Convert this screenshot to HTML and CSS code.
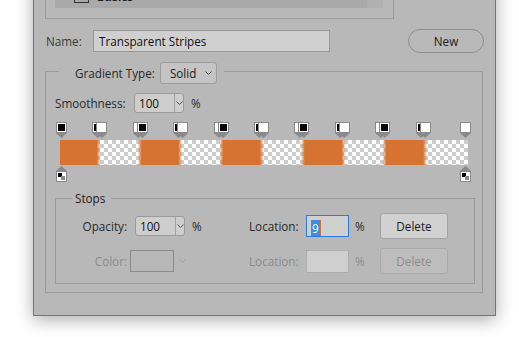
FILE: index.html
```html
<!DOCTYPE html>
<html lang="en">
<head>
  <meta charset="UTF-8">
  <title>Gradient Editor</title>
  <link rel="stylesheet" href="styles.css">
</head>
<body>
  <div class="dialog">
    <div class="presets">
      <div class="preset-list">
        <div class="preset-row">
          <svg class="twisty" width="5" height="8" viewBox="0 0 5 8"><path d="M0.5 0.5 L4 4 L0.5 7.5" fill="none" stroke="#333" stroke-width="1"/></svg>
          <span class="folder"></span>
          <span class="preset-name">Basics</span>
        </div>
        <div class="preset-scroll"></div>
      </div>
    </div>

    <div class="name-row">
      <span class="label name-label">Name:</span>
      <div class="text-box name-input">Transparent Stripes</div>
      <button class="btn-new">New</button>
    </div>

    <fieldset class="group gradient-group">
      <legend class="type-legend">
        <span class="label">Gradient Type:</span>
        <span class="select">Solid
          <svg class="chev" width="7" height="4" viewBox="0 0 7 4"><path d="M0.5 0.5 L3.5 3.5 L6.5 0.5" fill="none" stroke="#555" stroke-width="1"/></svg>
        </span>
      </legend>

      <div class="smooth-row">
        <span class="label smooth-label">Smoothness:</span>
        <span class="combo">
          <span class="combo-value">100</span>
          <span class="combo-btn"><svg class="chev" width="7" height="4" viewBox="0 0 7 4"><path d="M0.5 0.5 L3.5 3.5 L6.5 0.5" fill="none" stroke="#555" stroke-width="1"/></svg></span>
        </span>
        <span class="label pct">%</span>
      </div>

      <div class="gradient-editor">
        <div class="stop-track top">
          <span class="stop op" style="left:0%"><b class="sq black"></b></span>
          <span class="stop op" style="left:9%"><b class="sq black"></b></span>
          <span class="stop op" style="left:10%"></span>
          <span class="stop op" style="left:19%"></span>
          <span class="stop op" style="left:20%"><b class="sq black"></b></span>
          <span class="stop op" style="left:29%"><b class="sq black"></b></span>
          <span class="stop op" style="left:30%"></span>
          <span class="stop op" style="left:39%"></span>
          <span class="stop op" style="left:40%"><b class="sq black"></b></span>
          <span class="stop op" style="left:49%"><b class="sq black"></b></span>
          <span class="stop op" style="left:50%"></span>
          <span class="stop op" style="left:59%"></span>
          <span class="stop op" style="left:60%"><b class="sq black"></b></span>
          <span class="stop op" style="left:69%"><b class="sq black"></b></span>
          <span class="stop op" style="left:70%"></span>
          <span class="stop op" style="left:79%"></span>
          <span class="stop op" style="left:80%"><b class="sq black"></b></span>
          <span class="stop op" style="left:89%"><b class="sq black"></b></span>
          <span class="stop op" style="left:90%"></span>
          <span class="stop op" style="left:100%"></span>
        </div>
        <div class="gradient-bar"></div>
        <div class="stop-track bottom">
          <span class="stop col" style="left:0%"><b class="fg"></b><b class="bg"></b></span>
          <span class="stop col" style="left:100%"><b class="fg"></b><b class="bg"></b></span>
        </div>
      </div>

      <fieldset class="group stops-group">
        <legend class="stops-legend">Stops</legend>

        <div class="stop-row">
          <span class="label cell-label">Opacity:</span>
          <span class="cell-ctrl">
            <span class="combo">
              <span class="combo-value">100</span>
              <span class="combo-btn"><svg class="chev" width="7" height="4" viewBox="0 0 7 4"><path d="M0.5 0.5 L3.5 3.5 L6.5 0.5" fill="none" stroke="#555" stroke-width="1"/></svg></span>
            </span>
          </span>
          <span class="label cell-pct">%</span>
          <span class="label cell-loc">Location:</span>
          <div class="text-box loc-input focused"><span class="sel">9</span></div>
          <span class="label loc-pct">%</span>
          <button class="btn-delete">Delete</button>
        </div>

        <div class="stop-row disabled">
          <span class="label cell-label">Color:</span>
          <span class="cell-ctrl">
            <span class="swatch"></span>
            <svg class="chev swatch-chev" width="7" height="4" viewBox="0 0 7 4"><path d="M0.5 0.5 L3.5 3.5 L6.5 0.5" fill="none" stroke="#9c9c9c" stroke-width="1"/></svg>
          </span>
          <span class="label cell-pct"></span>
          <span class="label cell-loc">Location:</span>
          <div class="text-box loc-input"></div>
          <span class="label loc-pct">%</span>
          <button class="btn-delete">Delete</button>
        </div>
      </fieldset>
    </fieldset>
  </div>
</body>
</html>
```

FILE: styles.css
```css
body {
  margin: 0;
  height: 337px;
  overflow: hidden;
  background: #fff;
  font-family: "Open Sans", "Noto Sans", sans-serif;
  font-size: 11.7px;
  color: #1c1c1c;
}
.dialog {
  box-sizing: border-box;
  width: 463px;
  margin: -40px 0 0 33px;
  padding: 0 12px 22px 11px;
  background: #b8b8b8;
  border: 1px solid #757575;
  box-shadow: 0 4px 16px rgba(0, 0, 0, 0.32);
}
.label {
  color: #2a2a2a;
  line-height: 16px;
}

/* preset list (cut off at the top) */
.presets {
  box-sizing: border-box;
  width: 349px;
  margin-top: 10px;
  padding: 9px 10px 10px 9px;
  border: 1px solid #9c9c9c;
}
.preset-list {
  display: flex;
  height: 27px;
  background: #a9a9a9;
}
.preset-row {
  flex: 1;
  display: flex;
  align-items: flex-start;
  padding: 7px 0 0 8px;
  line-height: 16px;
}
.twisty {
  margin-top: 4px;
}
.folder {
  width: 13px;
  height: 9px;
  margin: 4px 0 0 6px;
  border: 1px solid #333;
}
.preset-name {
  margin-left: 8px;
  font-weight: 700;
}
.preset-scroll {
  width: 16px;
  background: #b0b0b0;
}

/* name row */
.name-row {
  display: flex;
  align-items: center;
  height: 24px;
  margin: 10px -1px 0 0;
}
.name-label {
  width: 47px;
  margin-left: 1px;
  color: #3a3a3a;
}
.text-box {
  box-sizing: border-box;
  height: 22px;
  line-height: 20px;
  background: #d0d0d0;
  border: 1px solid #979797;
  color: #111;
}
.name-input {
  width: 237px;
  padding-left: 5px;
}
.btn-new {
  box-sizing: border-box;
  width: 76px;
  height: 24px;
  margin-left: auto;
  padding: 0;
  font: inherit;
  color: #1c1c1c;
  background: #b9b9b9;
  border: 1px solid #8e8e8e;
  border-radius: 12px;
}

/* group boxes */
.group {
  min-width: 0;
  margin: 0;
  border: 1px solid #9b9b9b;
}
.gradient-group {
  margin-top: 5px;
  padding: 9px 7px 8px 9px;
}
.type-legend {
  display: flex;
  align-items: center;
  margin-left: 4px;
  padding: 4px 7px 0 16px;
}
.select {
  box-sizing: border-box;
  display: flex;
  align-items: center;
  justify-content: space-between;
  width: 57px;
  height: 22px;
  margin-left: 5px;
  padding: 0 4px 0 9px;
  background: #c4c4c4;
  border: 1px solid #9d9d9d;
  border-radius: 3px;
  color: #1c1c1c;
}

/* combo box */
.smooth-row {
  display: flex;
  align-items: center;
  height: 20px;
}
.smooth-label {
  width: 79px;
}
.combo {
  box-sizing: border-box;
  display: flex;
  width: 50px;
  height: 20px;
  background: #cecece;
  border: 1px solid #9a9a9a;
  border-radius: 3px;
  color: #111;
}
.combo-value {
  width: 35px;
  padding-left: 4px;
  line-height: 18px;
  border-right: 1px solid #a3a3a3;
}
.combo-btn {
  flex: 1;
  display: flex;
  align-items: center;
  justify-content: center;
}
.pct {
  margin-left: 7px;
}

/* gradient bar and stops */
.gradient-editor {
  margin: 9px 7px 0 5px;
}
.stop-track {
  position: relative;
  height: 18px;
  margin: 0 3px 0 1px;
}
.stop-track.bottom {
  height: 16px;
  margin-top: 1px;
}
.stop {
  position: absolute;
  top: 0;
  width: 11px;
  height: 16px;
  margin-left: -5px;
}
.stop.op::before {
  content: "";
  display: block;
  box-sizing: border-box;
  width: 11px;
  height: 11px;
  background: #fff;
  border: 1px solid #8a8a8a;
}
.stop.op::after {
  content: "";
  display: block;
  width: 11px;
  height: 5px;
  background: #8a8a8a;
  clip-path: polygon(0 0, 100% 0, 50% 100%);
}
.stop .sq {
  position: absolute;
  left: 2px;
  top: 2px;
  width: 7px;
  height: 7px;
}
.sq.black {
  background: #000;
}
.stop.col::before {
  content: "";
  display: block;
  width: 11px;
  height: 5px;
  background: #8a8a8a;
  clip-path: polygon(50% 0, 100% 100%, 0 100%);
}
.stop.col::after {
  content: "";
  display: block;
  box-sizing: border-box;
  width: 11px;
  height: 11px;
  background: #fff;
  border: 1px solid #8a8a8a;
}
.stop.col .fg,
.stop.col .bg {
  position: absolute;
  width: 4px;
  height: 4px;
  z-index: 1;
}
.stop.col .fg {
  left: 2px;
  top: 7px;
  background: #000;
}
.stop.col .bg {
  left: 5px;
  top: 10px;
  background: #8c8c8c;
}
.gradient-bar {
  height: 25px;
  background-image:
    linear-gradient(90deg,
      #d77332 0%, #d77332 9%, rgba(215, 115, 50, 0) 10%,
      rgba(215, 115, 50, 0) 19%, #d77332 20%, #d77332 29%, rgba(215, 115, 50, 0) 30%,
      rgba(215, 115, 50, 0) 39%, #d77332 40%, #d77332 49%, rgba(215, 115, 50, 0) 50%,
      rgba(215, 115, 50, 0) 59%, #d77332 60%, #d77332 69%, rgba(215, 115, 50, 0) 70%,
      rgba(215, 115, 50, 0) 79%, #d77332 80%, #d77332 89%, rgba(215, 115, 50, 0) 90%,
      rgba(215, 115, 50, 0) 100%),
    repeating-conic-gradient(#cdcdcd 0 25%, #fff 0 50%);
  background-size: 100% 100%, 8px 8px;
}

/* stops group */
.stops-group {
  margin-top: 8px;
  padding: 7px 0 9px 0;
}
.stops-legend {
  margin-left: 16px;
  padding: 0 6px 0 3px;
  line-height: 16px;
  color: #1c1c1c;
}
.stop-row {
  display: flex;
  align-items: center;
  height: 26px;
}
.stop-row + .stop-row {
  margin-top: 9px;
}
.cell-label {
  width: 71px;
  text-align: right;
}
.cell-ctrl {
  display: flex;
  align-items: center;
  width: 63px;
}
.cell-ctrl .combo {
  margin-left: 8px;
}
.cell-pct {
  width: 57px;
  padding-left: 2px;
}
.cell-loc {
  width: 51px;
}
.loc-input {
  width: 43px;
  margin-left: 6px;
  padding-left: 4px;
}
.loc-input.focused {
  border-color: #2a7be4;
}
.sel {
  display: inline-block;
  height: 16px;
  line-height: 16px;
  padding: 0 1px;
  vertical-align: middle;
  background: #3b8de2;
  color: #fff;
  border-right: 1px solid #d0752f;
}
.loc-pct {
  width: 25px;
  margin-left: 6px;
}
.btn-delete {
  box-sizing: border-box;
  width: 68px;
  height: 26px;
  padding: 0;
  font: inherit;
  color: #1c1c1c;
  background: #d1d1d1;
  border: 1px solid #a3a3a3;
  border-radius: 3px;
}
.swatch {
  box-sizing: border-box;
  width: 44px;
  height: 22px;
  margin-left: 3px;
  border: 1px solid #8a8a8a;
}
.swatch-chev {
  margin-left: 5px;
}
.disabled .label {
  color: #8c8c8c;
}
.disabled .loc-input {
  height: 23px;
  background: #cfcfcf;
  border-color: #adadad;
}
.disabled .btn-delete {
  color: #8e8e8e;
  background: #bdbdbd;
  border-color: #a9a9a9;
}
```
